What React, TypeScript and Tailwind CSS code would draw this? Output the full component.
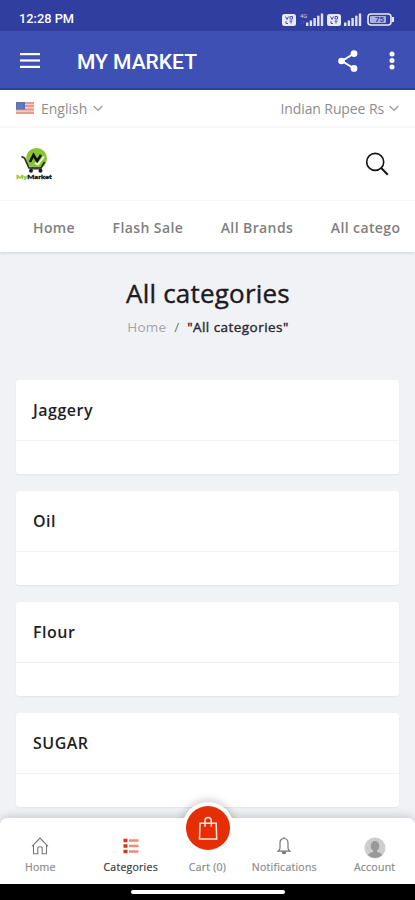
import { ReactNode } from "react";

const categories = ["Jaggery", "Oil", "Flour", "SUGAR"];

function VolteBadge() {
    return (
        <svg width="14" height="12" viewBox="0 0 14 12">
            <rect width="14" height="12" rx="2.5" fill="#e8eafa" />
            <path
                d="M3.5 2.5l1.5 3 1.5-3M8 2.5h2.5v2.5H8zM4 7v2.5h2M7.5 7h3M9 7v2.5"
                fill="none"
                stroke="#4652ac"
                strokeWidth="1"
            />
        </svg>
    );
}

function Signal() {
    return (
        <svg width="18" height="13" viewBox="0 0 18 13" fill="#dfe2f8">
            <rect x="0" y="9.5" width="2.4" height="3.5" />
            <rect x="3.7" y="7.5" width="2.4" height="5.5" />
            <rect x="7.4" y="5" width="2.4" height="8" />
            <rect x="11.1" y="2.7" width="2.4" height="10.3" />
            <rect x="14.8" y="0.5" width="2.4" height="12.5" />
        </svg>
    );
}

function StatusBar() {
    return (
        <div className="h-[31px] bg-[#303e9f] flex items-center pl-[19px] pr-[21px] pt-[8px] text-white">
            <span className="font-[Roboto] font-medium text-[12.8px] leading-none flex-1">
                12:28 PM
            </span>
            <div className="flex items-center">
                <VolteBadge />
                <div className="w-[9px] ml-[4px] -mr-[3px] h-[13px] text-[6px] leading-[6px] font-[Roboto] text-[#c5cbf0]">
                    4G
                    <div className="text-[5px] text-[#7d88d0]">↓↑</div>
                </div>
                <Signal />
                <div className="w-[3px]" />
                <VolteBadge />
                <div className="w-[3px]" />
                <Signal />
                <svg
                    className="ml-[5px]"
                    width="27"
                    height="13"
                    viewBox="0 0 27 13"
                >
                    <rect
                        x="1"
                        y="1"
                        width="23"
                        height="11"
                        rx="3"
                        fill="#303e9f"
                        stroke="#e8eafa"
                        strokeWidth="1.6"
                    />
                    <rect
                        x="3"
                        y="3"
                        width="16"
                        height="7"
                        rx="1"
                        fill="#aab2e4"
                    />
                    <rect x="25" y="4" width="2" height="5" fill="#e8eafa" />
                    <text
                        x="12.5"
                        y="9.3"
                        fontSize="8"
                        fontWeight="700"
                        fontFamily="Roboto"
                        textAnchor="middle"
                        fill="#303e9f"
                    >
                        75
                    </text>
                </svg>
            </div>
        </div>
    );
}

function AppBar() {
    return (
        <div className="h-[59px] bg-[#3f50b4] border-b-2 border-[#2e3ea8] flex items-center pl-[20px] pr-[20px] text-white">
            <svg
                className="mt-[2px]"
                width="20"
                height="15"
                viewBox="0 0 20 15"
                fill="#fff"
            >
                <rect y="0" width="20" height="2.2" />
                <rect y="6.4" width="20" height="2.2" />
                <rect y="12.8" width="20" height="2.2" />
            </svg>
            <h1 className="ml-[37px] mt-[5px] flex-1 font-[Roboto] font-medium text-[21px] leading-none">
                MY MARKET
            </h1>
            <svg
                className="mt-[2px]"
                width="20"
                height="22"
                viewBox="0 0 20 22"
                fill="#fff"
            >
                <path
                    d="M16 3.5L4 11l12 7.5"
                    fill="none"
                    stroke="#fff"
                    strokeWidth="2"
                />
                <circle cx="16" cy="3.6" r="3.4" />
                <circle cx="3.5" cy="11" r="3.3" />
                <circle cx="16" cy="18.4" r="3.4" />
            </svg>
            <svg
                className="ml-[31px] mt-[2px]"
                width="6"
                height="19"
                viewBox="0 0 6 19"
                fill="#fff"
            >
                <circle cx="3" cy="3" r="2.5" />
                <circle cx="3" cy="9.5" r="2.5" />
                <circle cx="3" cy="16" r="2.5" />
            </svg>
        </div>
    );
}

function Chevron() {
    return (
        <svg width="10" height="7" viewBox="0 0 10 7">
            <path
                d="M0.7 1l4.3 4.3L9.3 1"
                fill="none"
                stroke="#949494"
                strokeWidth="1.2"
            />
        </svg>
    );
}

function LocaleBar() {
    return (
        <div className="h-[38px] border-b-2 border-[#f8f8f9] flex items-center pl-[16px] pr-[16px] text-[14px] text-[#8d8d8d]">
            <svg width="18" height="12" viewBox="0 0 18 12">
                <rect width="18" height="12" fill="#f6c9c4" />
                <path
                    d="M0 1h18M0 4h18M0 7.5h18M0 11h18"
                    stroke="#e6897f"
                    strokeWidth="1.4"
                />
                <rect width="9" height="7.5" fill="#5574b8" />
                <path
                    d="M1.5 2h6M1.5 4h6M1.5 6h6"
                    stroke="#89a1d2"
                    strokeWidth="0.7"
                    strokeDasharray="1 1"
                />
            </svg>
            <span className="ml-[7px] mr-[6px]">English</span>
            <Chevron />
            <span className="ml-auto mr-[5px] tracking-[-0.1px]">
                Indian Rupee Rs
            </span>
            <Chevron />
        </div>
    );
}

function Logo() {
    return (
        <svg width="37" height="34" viewBox="0 0 37 34">
            <circle cx="20.5" cy="11.5" r="10.5" fill="#8bc334" />
            <path
                d="M5.5 9.5l3 1.5 4.5 10h12l3.5-6"
                fill="none"
                stroke="#222b25"
                strokeWidth="1.7"
            />
            <path
                d="M14 15l3.5-7 3.5 6 4-6"
                fill="none"
                stroke="#111"
                strokeWidth="2.6"
            />
            <path
                d="M19 16l3 1.5 6-8"
                fill="none"
                stroke="#eff7dd"
                strokeWidth="2"
            />
            <path d="M14 22h12" stroke="#333" strokeWidth="1" />
            <circle cx="15" cy="23.7" r="2" fill="#1b1b1b" />
            <circle cx="24.5" cy="23.7" r="2" fill="#1b1b1b" />
            <text
                x="0.3"
                y="31.6"
                fontSize="6.3"
                fontWeight="900"
                fontFamily="Lato, sans-serif"
                textLength="35.5"
                lengthAdjust="spacingAndGlyphs"
                fill="#111"
                stroke="#111"
                strokeWidth="0.3"
            >
                <tspan fill="#8bc334" stroke="#8bc334">
                    My
                </tspan>
                Market
            </text>
        </svg>
    );
}

function Header() {
    return (
        <>
            <div className="h-[73px] border-b border-[#f6f6f7] flex items-center justify-between pl-[16px] pr-[26px]">
                <Logo />
                <svg width="24" height="24" viewBox="0 0 24 24">
                    <circle
                        cx="10.2"
                        cy="9.9"
                        r="8.5"
                        fill="none"
                        stroke="#161616"
                        strokeWidth="1.6"
                    />
                    <path
                        d="M16.2 16l6.6 6.7"
                        stroke="#161616"
                        strokeWidth="2"
                    />
                </svg>
            </div>
            <nav className="h-[51px] pl-[33px] pt-[2px] flex items-center gap-[37.5px] whitespace-nowrap text-[14px] tracking-[0.4px] font-semibold text-[#808080]">
                <span>Home</span>
                <span>Flash Sale</span>
                <span>All Brands</span>
                <span>All catego</span>
            </nav>
        </>
    );
}

function CategoryCard({ name }: { name: string }) {
    return (
        <div className="h-[94px] bg-white rounded-[3px] shadow-[0_1px_2px_rgba(0,0,0,0.06)]">
            <div className="h-[61px] border-b border-[#f1f2f4] flex items-center pl-[17px] text-[16px] tracking-[0.5px] font-semibold text-[#1f1f1f]">
                {name}
            </div>
        </div>
    );
}

function TabItem({
    label,
    width,
    active,
    children,
}: {
    label: string;
    width: string;
    active?: boolean;
    children?: ReactNode;
}) {
    return (
        <div className={"flex flex-col items-center " + width}>
            <div className="h-[22px] flex items-center">{children}</div>
            <span
                className={
                    "mt-[3px] text-[10.5px] leading-[14px] tracking-[0.25px] whitespace-nowrap [-webkit-text-stroke:0.2px] " +
                    (active ? "text-[#3b3b3b]" : "text-[#8a8a8a]")
                }
            >
                {label}
            </span>
        </div>
    );
}

function BottomNav() {
    return (
        <div className="absolute left-0 bottom-0 w-full">
            <div className="relative h-[66px] bg-white rounded-t-[8px] shadow-[0_-2px_9px_rgba(0,0,0,0.17)]">
                <div className="absolute left-[182px] top-[-16px] size-[52px] rounded-full bg-white shadow-[0_-2px_8px_rgba(0,0,0,0.2)]" />
                <div className="relative h-full bg-white rounded-t-[8px] flex pt-[17px]">
                    <TabItem label="Home" width="w-[81px]">
                        <svg
                            width="18"
                            height="18"
                            viewBox="0 0 18 18"
                            fill="none"
                            stroke="#777"
                            strokeWidth="1.1"
                        >
                            <path d="M1 9.3L9 1l8 8.3M2.5 8v8.8h4.3v-5.3c0-1.2.7-1.8 2.2-1.8s2.2.6 2.2 1.8v5.3h4.3V8" />
                        </svg>
                    </TabItem>
                    <TabItem label="Categories" width="w-[100px]" active>
                        <svg width="16" height="16" viewBox="0 0 16 16">
                            <path
                                d="M0.5 2.5h4M0.5 8h4M0.5 13.5h4"
                                stroke="#d83418"
                                strokeWidth="3.7"
                            />
                            <path
                                d="M6 2.5h9.5M6 8h9.5M6 13.5h9.5"
                                stroke="#ec8c7a"
                                strokeWidth="2.4"
                            />
                        </svg>
                    </TabItem>
                    <TabItem label="Cart (0)" width="w-[54px]" />
                    <TabItem label="Notifications" width="w-[100px]">
                        <svg
                            width="14"
                            height="18"
                            viewBox="0 0 14 18"
                            fill="none"
                            stroke="#777"
                            strokeWidth="1.2"
                        >
                            <path d="M7 1.5C4.4 1.5 3 3.5 3 6v5c0 1.5-.8 2.3-2 3.2h12c-1.2-.9-2-1.7-2-3.2V6c0-2.5-1.4-4.5-4-4.5zM7 0v2" />
                            <path
                                d="M5.3 15c.2 2.3 3.2 2.3 3.4 0z"
                                fill="#777"
                            />
                        </svg>
                    </TabItem>
                    <TabItem label="Account" width="w-[81px]">
                        <svg
                            className="mt-[4px]"
                            width="22"
                            height="22"
                            viewBox="0 0 22 22"
                        >
                            <circle cx="11" cy="11" r="10.5" fill="#cdcdcd" />
                            <ellipse
                                cx="11"
                                cy="9"
                                rx="4.3"
                                ry="5"
                                fill="#999"
                            />
                            <path
                                d="M9 12h4v3c3 .8 4.5 1.5 5 3.3a10.5 10.5 0 0 1-14 0c.5-1.800 2-2.500 5-3.300z"
                                fill="#999"
                            />
                        </svg>
                    </TabItem>
                </div>
                <div className="absolute left-[186px] top-[-12px] size-[44px] rounded-full bg-[#e62e04] flex items-center justify-center">
                    <svg
                        width="22"
                        height="25"
                        viewBox="0 0 22 25"
                        fill="none"
                        stroke="#ffeae5"
                        strokeWidth="1.5"
                    >
                        <path d="M3 7.3h16.200l.5 15.700H2.500zM8 10.800V4.800c0-4.400 6.300-4.400 6.300 0v6" />
                    </svg>
                </div>
            </div>
            <div className="h-[16px] bg-black pt-[6px]">
                <div className="w-[154px] h-[4px] rounded-full bg-white ml-[131px]" />
            </div>
        </div>
    );
}

export default function App() {
    return (
        <div className="relative w-[415px] h-[900px] overflow-hidden bg-[#f1f2f6] font-['Open_Sans',sans-serif]">
            <StatusBar />
            <AppBar />
            <div className="bg-white shadow-[0_1px_3px_rgba(0,0,0,0.14)]">
                <LocaleBar />
                <Header />
            </div>
            <div className="h-[128px] pt-[23px] pl-[1px] text-center">
                <h2 className="text-[26px] leading-[36px] tracking-[0.2px] text-[#1b1b1f] [-webkit-text-stroke:0.4px]">
                    All categories
                </h2>
                <div className="mt-[6px] flex justify-center gap-[8px] text-[13.5px] leading-[20px]">
                    <span className="text-[#a4a5a9] tracking-[0.2px]">
                        Home
                    </span>
                    <span className="text-[#77787c]">/</span>
                    <span className="tracking-[0.45px] text-[#2a2a2d] [-webkit-text-stroke:0.4px]">
                        "All categories"
                    </span>
                </div>
            </div>
            <div className="px-[16px] flex flex-col gap-[17px]">
                {categories.map((name) => (
                    <CategoryCard key={name} name={name} />
                ))}
            </div>
            <BottomNav />
        </div>
    );
}
